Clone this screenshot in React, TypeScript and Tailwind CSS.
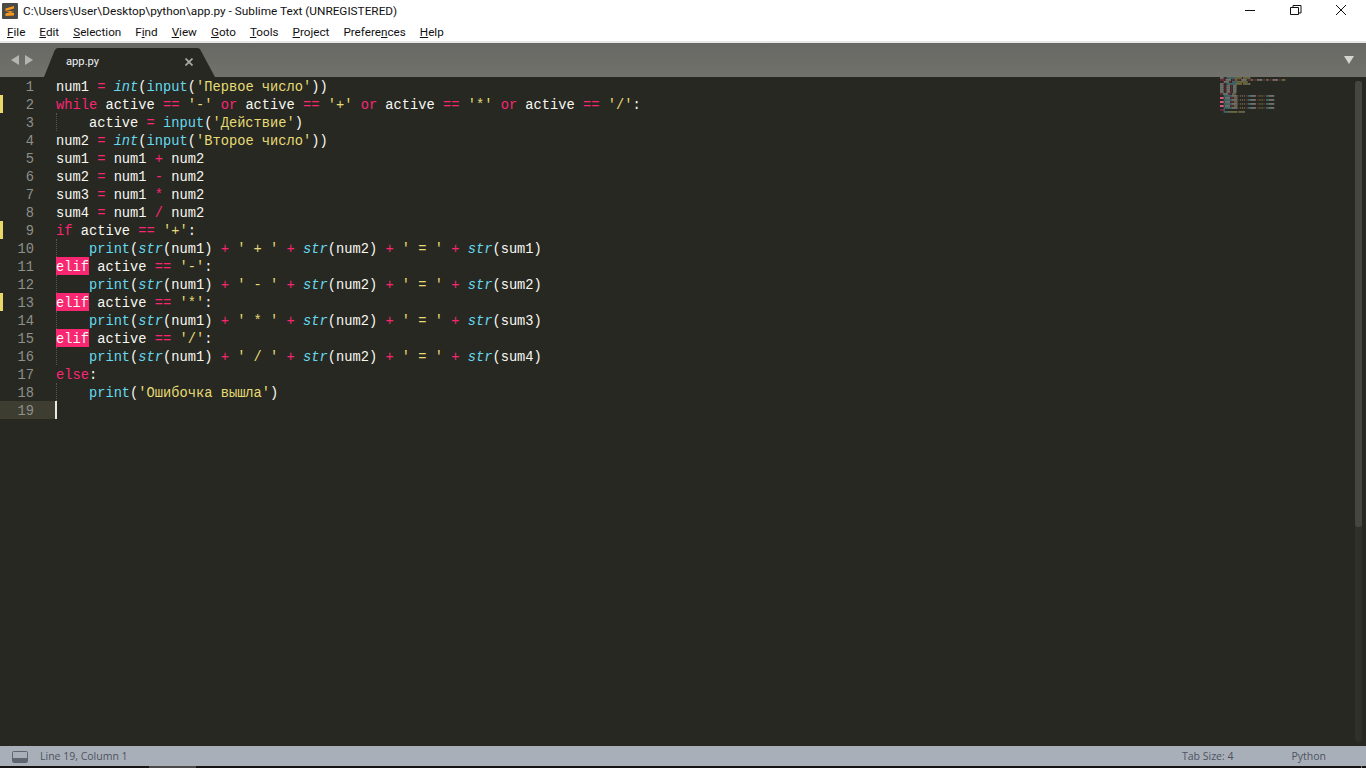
const KW = "text-[#f92672]";
const FN = "text-[#66d9ef]";
const IT = "text-[#66d9ef] italic";
const ST = "text-[#e6db74]";
const HL = "inline-block h-[18px] bg-[#f92672] text-[#f8f8f2]";

type Tok = [string, string?];

const sp = (name: string, op: string): Tok[] => [[name + " "], [op, KW], [" "]];

const printLine = (op: string, sum: string): Tok[] => [
  ["    "], ["print", FN], ["("], ["str", IT], ["(num1) "], ["+", KW], [" "],
  ["' " + op + " '", ST], [" "], ["+", KW], [" "], ["str", IT], ["(num2) "], ["+", KW], [" "],
  ["' = '", ST], [" "], ["+", KW], [" "], ["str", IT], ["(" + sum + ")"],
];

const LINES: { toks: Tok[]; mark?: boolean; guide?: boolean }[] = [
  { toks: [...sp("num1", "="), ["int", IT], ["("], ["input", FN], ["("], ["'Первое число'", ST], ["))"]] },
  {
    mark: true,
    toks: [["while", KW], [" active "], ["==", KW], [" "], ["'-'", ST], [" "], ["or", KW], [" active "], ["==", KW], [" "], ["'+'", ST], [" "], ["or", KW], [" active "], ["==", KW], [" "], ["'*'", ST], [" "], ["or", KW], [" active "], ["==", KW], [" "], ["'/'", ST], [":"]],
  },
  { guide: true, toks: [["    active "], ["=", KW], [" "], ["input", FN], ["("], ["'Действие'", ST], [")"]] },
  { toks: [...sp("num2", "="), ["int", IT], ["("], ["input", FN], ["("], ["'Второе число'", ST], ["))"]] },
  { toks: [...sp("sum1", "="), ["num1 "], ["+", KW], [" num2"]] },
  { toks: [...sp("sum2", "="), ["num1 "], ["-", KW], [" num2"]] },
  { toks: [...sp("sum3", "="), ["num1 "], ["*", KW], [" num2"]] },
  { toks: [...sp("sum4", "="), ["num1 "], ["/", KW], [" num2"]] },
  { mark: true, toks: [["if", KW], [" active "], ["==", KW], [" "], ["'+'", ST], [":"]] },
  { guide: true, toks: printLine("+", "sum1") },
  { toks: [["elif", HL], [" active "], ["==", KW], [" "], ["'-'", ST], [":"]] },
  { guide: true, toks: printLine("-", "sum2") },
  { mark: true, toks: [["elif", HL], [" active "], ["==", KW], [" "], ["'*'", ST], [":"]] },
  { guide: true, toks: printLine("*", "sum3") },
  { toks: [["elif", HL], [" active "], ["==", KW], [" "], ["'/'", ST], [":"]] },
  { guide: true, toks: printLine("/", "sum4") },
  { toks: [["else", KW], [":"]] },
  { guide: true, toks: [["    "], ["print", FN], ["("], ["'Ошибочка вышла'", ST], [")"]] },
  { toks: [] },
];

const MENU: [string, string, string][] = [
  ["", "F", "ile"], ["", "E", "dit"], ["", "S", "election"], ["F", "i", "nd"], ["", "V", "iew"],
  ["", "G", "oto"], ["", "T", "ools"], ["", "P", "roject"], ["Prefere", "n", "ces"], ["", "H", "elp"],
];

const miniColour = (c?: string) => {
  if (c === KW) return "#f92672";
  if (c === FN || c === IT) return "#66d9ef";
  if (c === ST) return "#e6db74";
  return "#f8f8f2";
};

// minimap is the code itself at about 1px per char, 2px per line
const Minimap = () => (
  <svg width="70" height="40" className="absolute left-[1220px] top-0">
    {LINES.map((l, i) => {
      let col = 0;
      return l.toks.map(([t, c], j) => {
        const start = col;
        col += t.length;
        if (c === HL) {
          return <rect key={i + "-" + j} x={0} y={i * 2 + 0.2} width={t.length * 0.92} height="1.6" fill="#ff6a9c" />;
        }
        return Array.from(t.matchAll(/\S+/g)).map((m, k) => (
          <rect
            key={i + "-" + j + "-" + k}
            x={(start + m.index) * 0.92}
            y={i * 2 + 0.3}
            width={m[0].length * 0.92}
            height="1.3"
            fill={miniColour(c)}
            opacity="0.5"
          />
        ));
      });
    })}
  </svg>
);

export default function App() {
  return (
    <div className="h-screen w-full overflow-hidden flex flex-col bg-white font-['Roboto',sans-serif]">
      {/* title bar */}
      <div className="h-[24px] flex items-center shrink-0 relative">
        <svg width="16" height="16" viewBox="0 0 16 16" className="ml-[2px] self-start mt-[3px]">
          <rect width="16" height="16" rx="1" fill="#4a4a48" />
          <path d="M3.500 5.500 12 3v2.600L3.500 8zM3.500 8 12 10v2.600L3.500 13v-2.600l8.500-2.400z" fill="#f89820" />
        </svg>
        <span className="ml-[5px] text-[11.800px] text-[#111] whitespace-nowrap">C:\Users\User\Desktop\python\app.py - Sublime Text (UNREGISTERED)</span>
        <svg width="166" height="22" viewBox="0 0 166 22" className="absolute right-0 top-0" fill="none" stroke="#111">
          <path d="M45 10.500h10" />
          <path d="M90.500 7.500h8v7h-8zM93 7V5.500h8v7.500h-2" />
          <path d="M136 5l10 10M146 5l-10 10" />
        </svg>
      </div>
      {/* menu bar */}
      <div className="h-[17px] flex items-center shrink-0 pl-[7px] gap-[14px] text-[11.700px] text-[#111]">
        {MENU.map(([a, u, b]) => (
          <span key={a + u + b} className="whitespace-nowrap">
            {a}
            <span className="underline">{u}</span>
            {b}
          </span>
        ))}
      </div>
      <div className="h-[2px] shrink-0 bg-[#e8e8e8]" />
      {/* tab bar */}
      <div className="h-[34px] shrink-0 bg-gradient-to-b from-[#686864] to-[#72726c] relative flex items-end">
        <div className="absolute left-[11px] top-[12px] flex gap-[6px]">
          <div className="w-0 h-0 border-y-[5px] border-y-transparent border-r-[8px] border-r-[#b4b4b0]" />
          <div className="w-0 h-0 border-y-[5px] border-y-transparent border-l-[8px] border-l-[#b4b4b0]" />
        </div>
        <svg width="171" height="29" viewBox="0 0 171 29" className="absolute left-[44px] bottom-0">
          <path d="M0 29 10 4Q11.500 0 14 0H153Q156 0 157 3L171 29Z" fill="#272822" />
        </svg>
        <span className="absolute left-[66px] top-[11px] text-[11.200px] text-[#eef2f4]">app.py</span>
        <svg width="8" height="8" viewBox="0 0 8 8" className="absolute left-[185px] top-[15px]" stroke="#a8a8a4" strokeWidth="1.800">
          <path d="M.5.5l7 7M7.500.5l-7 7" />
        </svg>
        <div className="absolute left-[1344px] top-[13px] w-0 h-0 border-x-[5px] border-x-transparent border-t-[8px] border-t-[#d4d4d0]" />
      </div>
      {/* editor */}
      <div className="flex-1 min-h-0 bg-[#272822] relative flex">
        <div className="w-[56px] shrink-0 font-['Liberation_Mono',monospace] text-[13.720px] leading-[22px] text-[#8f908a] text-right">
          {LINES.map((l, i) => (
            <div key={i} className={"relative h-[18px] pr-[22px] " + (i === 18 ? "bg-[#3e3d32]" : "")}>
              {l.mark && <div className="absolute left-0 top-0 w-[3px] h-[18px] bg-[#e8d868]" />}
              {i + 1}
            </div>
          ))}
        </div>
        <div className="flex-1 min-w-0 font-['Liberation_Mono',monospace] text-[13.720px] leading-[22px] text-[#f8f8f2] whitespace-pre">
          {LINES.map((l, i) => (
            <div key={i} className="relative h-[18px]">
              {l.guide && <div className="absolute left-0 top-0 h-[18px] border-l border-dotted border-[#55564e]" />}
              {i === 18 && <div className="absolute left-[-1px] top-0 w-[2px] h-[18px] bg-[#e8e8e0]" />}
              {l.toks.map(([t, c], j) => (
                <span key={j} className={c}>{t}</span>
              ))}
            </div>
          ))}
        </div>
        <Minimap />
        {/* scrollbar track + thumb */}
        <div className="absolute right-[4px] top-[4px] bottom-[4px] w-[7px] rounded-[3px] bg-[#2f302a]">
          <div className="h-[446px] rounded-[3px] bg-[#45463f]" />
        </div>
      </div>
      {/* status bar */}
      <div className="h-[20px] shrink-0 pt-[2px] bg-[#a9afb9] flex items-center justify-between text-[10.500px] text-[#4d5360] font-['Open_Sans',sans-serif]">
        <div className="flex items-center">
          <svg width="16" height="12" viewBox="0 0 16 12" className="ml-[12px]">
            <rect x=".5" y=".5" width="15" height="11" rx="1" fill="none" stroke="#5f6672" />
            <rect x="1" y="7" width="14" height="4" fill="#5f6672" />
          </svg>
          <span className="ml-[12px]">Line 19, Column 1</span>
        </div>
        <div className="flex items-center">
          <span className="mr-[58px]">Tab Size: 4</span>
          <span className="mr-[40px]">Python</span>
        </div>
      </div>
      <div className="h-[2px] shrink-0 bg-[#141414] flex">
        <div className="ml-[149px] w-[47px] bg-[#4a4a4a]" />
        <div className="ml-[1165px] w-[1px] bg-[#777]" />
      </div>
    </div>
  );
}
